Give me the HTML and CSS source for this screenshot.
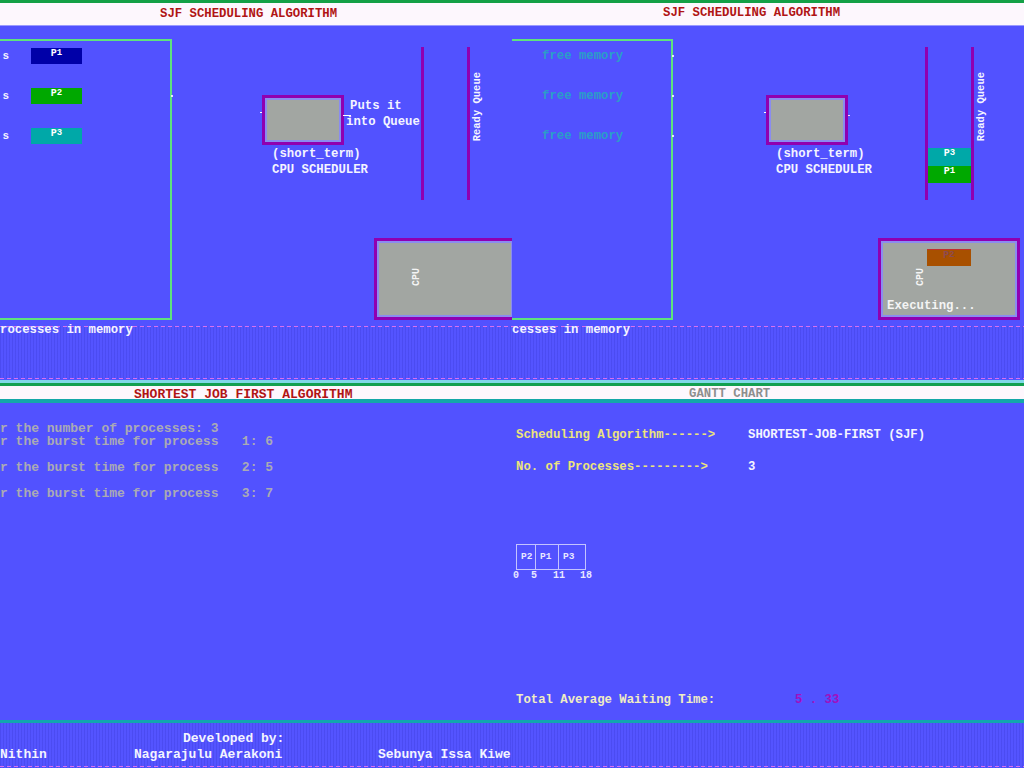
FILE: index.html
```html
<!DOCTYPE html>
<html lang="en">
<head>
<meta charset="utf-8">
<title>SJF Scheduling Algorithm</title>
<link rel="stylesheet" href="styles.css">
</head>
<body>
<div class="screen">

  <section class="panel anim anim--left">
    <header class="ahead"><h1 class="atitle">SJF SCHEDULING ALGORITHM</h1></header>
    <div class="stage">
      <div class="mem">
        <div class="mem-row"><span class="proc-name">s</span><span class="pbox pbox--1">P<sub>1</sub></span></div>
        <div class="mem-row"><span class="proc-name">s</span><span class="pbox pbox--2">P<sub>2</sub></span><i class="tick"></i></div>
        <div class="mem-row"><span class="proc-name">s</span><span class="pbox pbox--3">P<sub>3</sub></span></div>
      </div>
      <div class="sched sched--wire"><div class="sched-screen"></div></div>
      <div class="sched-note"><div class="note-1">Puts it</div><div>into Queue</div></div>
      <div class="sched-label"><div>(short_term)</div><div>CPU SCHEDULER</div></div>
      <div class="queue"></div>
      <div class="ready">Ready Queue</div>
      <div class="cpu">
        <div class="cpu-screen">
          <span class="cpu-tag">CPU</span>
        </div>
      </div>
    </div>
    <footer class="afoot"><span class="afoot-text">rocesses in memory</span></footer>
    <div class="aedge"></div>
  </section>

  <section class="panel anim anim--right">
    <header class="ahead"><h1 class="atitle">SJF SCHEDULING ALGORITHM</h1></header>
    <div class="stage">
      <div class="mem">
        <div class="mem-row"><span class="free">free memory</span><i class="tick"></i></div>
        <div class="mem-row"><span class="free">free memory</span><i class="tick"></i></div>
        <div class="mem-row"><span class="free">free memory</span><i class="tick"></i></div>
      </div>
      <div class="sched sched--dot"><div class="sched-screen"></div></div>
      <div class="sched-label"><div>(short_term)</div><div>CPU SCHEDULER</div></div>
      <div class="queue">
        <span class="qbox qbox--3">P<sub>3</sub></span>
        <span class="qbox qbox--1">P<sub>1</sub></span>
      </div>
      <div class="ready">Ready Queue</div>
      <div class="cpu">
        <div class="cpu-screen">
          <span class="cpu-job">P<sub>2</sub></span>
          <span class="cpu-tag">CPU</span>
          <span class="exec">Executing...</span>
        </div>
      </div>
    </div>
    <footer class="afoot"><span class="afoot-text">cesses in memory</span></footer>
    <div class="aedge"></div>
  </section>

  <section class="panel tpanel">
    <header class="thead"><h2 class="ttitle">SHORTEST JOB FIRST ALGORITHM</h2></header>
    <div class="tbody">
<pre class="console">r the number of processes: 3
r the burst time for process   1: 6

r the burst time for process   2: 5

r the burst time for process   3: 7</pre>
    </div>
    <footer class="tfoot">
      <p class="credit-head">Developed by:</p>
      <div class="names"><span>Nithin</span><span>Nagarajulu Aerakoni</span><span>Sebunya Issa Kiwe</span></div>
    </footer>
  </section>

  <section class="panel tpanel">
    <header class="thead"><h2 class="ttitle ttitle--grey">GANTT CHART</h2></header>
    <div class="tbody tbody--gantt">
      <div class="info"><span class="info-key">Scheduling Algorithm------&gt;</span><span class="info-val">SHORTEST-JOB-FIRST (SJF)</span></div>
      <div class="info"><span class="info-key">No. of Processes---------&gt;</span><span class="info-val">3</span></div>
      <div class="gantt">
        <span class="g-cell" style="width:20px">P2</span>
        <span class="g-cell" style="width:24px">P1</span>
        <span class="g-cell" style="width:28px">P3</span>
      </div>
      <div class="axis"><span>0</span><span>5</span><span>11</span><span>18</span></div>
      <div class="total"><span class="total-key">Total Average Waiting Time:</span><span class="total-val">5 . 33</span></div>
    </div>
    <footer class="tfoot"></footer>
  </section>

</div>
</body>
</html>
```

FILE: styles.css
```css
* { box-sizing: border-box; }

body {
  margin: 0;
  background: #5252ff;
}

.screen {
  width: 1024px;
  height: 768px;
  display: grid;
  grid-template-columns: 512px 512px;
  grid-template-rows: 383px 385px;
  overflow: hidden;
  font-family: "Liberation Mono", "DejaVu Sans Mono", monospace;
  font-weight: bold;
  font-size: 12.3px;
  line-height: 12px;
  color: #f4f4ff;
}

.panel {
  position: relative;
  overflow: hidden;
  min-width: 0;
  display: flex;
  flex-direction: column;
  background: #5252ff;
}

/* ---------- animation panels (top) ---------- */
.ahead {
  flex: none;
  height: 26px;
  border-top: 3px solid #14a046;
  border-bottom: 1px solid #9a9aff;
  background: #fdf7fd;
}

.atitle {
  margin: 0;
  font-size: 12.3px;
  line-height: 22px;
  color: #b01414;
  padding-left: 160px;
  white-space: nowrap;
}

.anim--right .atitle {
  padding-left: 151px;
  line-height: 20px;
}

.stage {
  position: relative;
  flex: none;
  height: 300px;
}

.anim--right .stage { margin-left: -8px; }

.mem {
  position: absolute;
  left: -10px;
  top: 13px;
  width: 182px;
  height: 281px;
  border: 2px solid #5ee27e;
  display: flex;
  flex-direction: column;
  gap: 24px;
  padding-top: 7px;
}

.anim--right .mem {
  width: 179px;
  padding-left: 46px;
}

.mem-row {
  position: relative;
  height: 16px;
  display: flex;
  align-items: center;
  white-space: nowrap;
}

.proc-name {
  width: 17px;
  margin-right: 22px;
  text-align: right;
  font-size: 11px;
}

.free {
  color: #2a9ec8;
}

.tick {
  position: absolute;
  right: -3px;
  top: 7px;
  width: 2px;
  height: 2px;
  background: #e4e4ff;
}

.pbox, .qbox, .cpu-job {
  display: flex;
  justify-content: center;
  align-items: flex-start;
  padding-top: 1px;
  font-size: 10px;
  line-height: 10px;
  color: #ffffff;
}

.pbox sub, .qbox sub, .cpu-job sub {
  font-size: 9px;
  line-height: 9px;
  vertical-align: -4px;
}

.pbox {
  width: 51px;
  height: 16px;
}

.pbox--1 { background: #0000a8; }
.pbox--2 { background: #00a800; }
.pbox--3 { background: #00a8a8; }

.sched {
  position: absolute;
  left: 262px;
  top: 69px;
  width: 82px;
  height: 50px;
  border: 3px solid #9000b0;
}

.sched::before {
  content: "";
  position: absolute;
  left: -5px;
  top: 14px;
  width: 2px;
  height: 1px;
  background: #ffffff;
}

.sched--wire::after {
  content: "";
  position: absolute;
  left: calc(100% + 2px);
  top: 17px;
  width: 8px;
  height: 1px;
  background: #ffffff;
}

.sched--dot::after {
  content: "";
  position: absolute;
  left: calc(100% + 3px);
  top: 17px;
  width: 2px;
  height: 1px;
  background: #ffd0ff;
}

.sched-screen {
  height: 100%;
  background: #a2a6a2;
  border: 2px solid #8a8cf0;
}

.sched-note {
  position: absolute;
  left: 346px;
  top: 72px;
  line-height: 16px;
  white-space: nowrap;
}

.note-1 { padding-left: 4px; }

.sched-label {
  position: absolute;
  left: 272px;
  top: 120px;
  line-height: 16px;
  white-space: nowrap;
}

.queue {
  position: absolute;
  left: 421px;
  top: 21px;
  width: 49px;
  height: 153px;
  border-left: 3px solid #9000b0;
  border-right: 3px solid #9000b0;
  padding-top: 101px;
  display: flex;
  flex-direction: column;
}

.qbox { height: 18px; }
.qbox--3 { background: #00a8a8; }
.qbox--1 { background: #00a800; height: 17px; }

.ready {
  position: absolute;
  left: 471px;
  top: 46px;
  writing-mode: vertical-rl;
  transform: rotate(180deg);
  font-size: 10.5px;
  line-height: 12px;
  white-space: nowrap;
}

.cpu {
  position: absolute;
  left: 374px;
  top: 212px;
  width: 142px;
  height: 82px;
  border: 3px solid #9000b0;
}

.cpu-screen {
  position: relative;
  height: 100%;
  background: #a2a6a2;
  border: 2px solid #8a8cf0;
}

.cpu-tag {
  position: absolute;
  left: 32px;
  top: 25px;
  writing-mode: vertical-rl;
  transform: rotate(180deg);
  font-size: 10px;
  line-height: 12px;
  color: #f4f4f4;
}

.cpu-job {
  position: absolute;
  left: 44px;
  top: 6px;
  width: 44px;
  height: 17px;
  background: #a85000;
  border-top: 1px solid #c03030;
  color: #8c4a52;
}

.exec {
  position: absolute;
  left: 4px;
  top: 57px;
  white-space: nowrap;
  color: #f4f4f4;
}

.afoot {
  flex: none;
  height: 53px;
  background:
    repeating-linear-gradient(90deg, #d870f0 0 4px, transparent 4px 7px) 0 0 / 100% 1px no-repeat,
    repeating-linear-gradient(90deg, #d870f0 0 4px, transparent 4px 7px) 0 100% / 100% 1px no-repeat,
    repeating-linear-gradient(90deg, rgba(30, 30, 170, 0.16) 0 1px, transparent 1px 3px),
    #5454ff;
}

.afoot-text {
  display: block;
  line-height: 8px;
  white-space: nowrap;
}

.aedge {
  flex: none;
  height: 4px;
  border-top: 1px solid #5252ff;
  background: #80d8e8;
}

/* ---------- text panels (bottom) ---------- */
.thead {
  flex: none;
  height: 20px;
  border-top: 3px solid #12a050;
  border-bottom: 4px solid #14a8a8;
  background: #fdf7fd;
}

.ttitle {
  margin: 0;
  height: 13px;
  font-size: 13px;
  line-height: 17px;
  color: #b01414;
  padding-left: 134px;
  white-space: nowrap;
}

.ttitle--grey {
  font-size: 12.3px;
  color: #8e8e8e;
  padding-left: 177px;
}

.tbody {
  flex: 1;
  min-height: 0;
  display: flex;
  flex-direction: column;
}

.console {
  margin: 0;
  padding-top: 20px;
  font-family: "Liberation Mono", "DejaVu Sans Mono", monospace;
  font-weight: bold;
  font-size: 13px;
  line-height: 12.9px;
  color: #aaaab4;
  white-space: pre;
}

.tbody--gantt {
  padding: 26px 0 14px 4px;
}

.info {
  display: grid;
  grid-template-columns: 232px auto;
  line-height: 12px;
  white-space: nowrap;
}

.info + .info { margin-top: 20px; }

.info-key { color: #ece47c; }
.info-val { color: #f4f4ff; }

.gantt {
  margin-top: 71px;
  display: flex;
  height: 26px;
}

.g-cell {
  border: 1px solid #c4c4ff;
  display: flex;
  align-items: center;
  padding-left: 4px;
  font-size: 9.5px;
  color: #e8e8ff;
}

.g-cell + .g-cell { margin-left: -1px; }

.axis {
  display: grid;
  grid-template-columns: 18px 22px 27px auto;
  margin-left: -3px;
  margin-top: 1px;
  font-size: 10px;
  line-height: 10px;
  color: #e8e8ff;
}

.total {
  margin-top: auto;
  display: grid;
  grid-template-columns: 279px auto;
  line-height: 12px;
  white-space: nowrap;
}

.total-key { color: #f0ecc4; }
.total-val { color: #a010c0; }

.tfoot {
  flex: none;
  height: 48px;
  border-top: 3px solid #12a6ae;
  padding-top: 8px;
  font-size: 13px;
  line-height: 16px;
  background:
    repeating-linear-gradient(90deg, #d870f0 0 4px, transparent 4px 7px) 0 calc(100% - 1px) / 100% 1px no-repeat,
    repeating-linear-gradient(90deg, rgba(30, 30, 170, 0.16) 0 1px, transparent 1px 3px),
    #5454ff;
}

.credit-head {
  margin: 0;
  padding-left: 183px;
  white-space: nowrap;
}

.names {
  display: grid;
  grid-template-columns: 134px 244px auto;
  white-space: nowrap;
}
```
